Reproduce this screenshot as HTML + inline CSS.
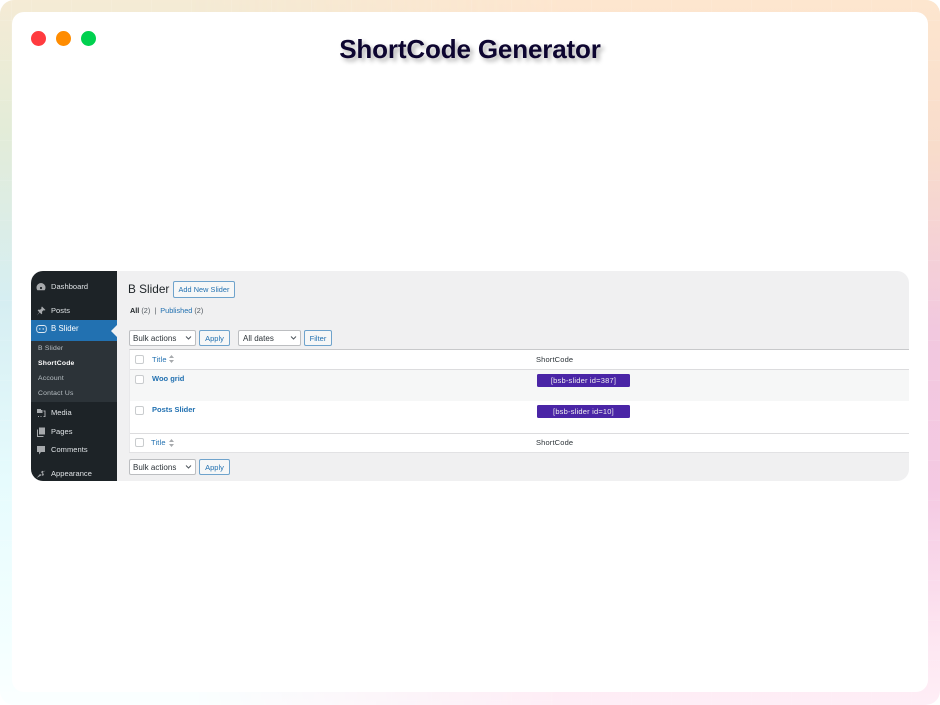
<!DOCTYPE html>
<html><head><meta charset="utf-8"><style>
*{box-sizing:border-box}
html,body{margin:0;padding:0;background:#fff}
body{width:940px;height:705px;position:relative;overflow:hidden;font-family:"Liberation Sans",sans-serif}
.a{position:absolute;white-space:nowrap}
#bg{left:0;top:0;width:940px;height:705px;border-radius:14px;background:
linear-gradient(180deg,#f5ebd5 0,#e3ecd8 130px,#d6eef2 300px,#e6fbfd 480px,#f3ffff 640px,#fbffff 705px)}
#bg2{left:0;top:0;width:940px;height:705px;border-radius:14px;background:
linear-gradient(180deg,#fde6cf 0,#f8dccb 150px,#f2c8df 330px,#f5c9e3 490px,#fde6f1 640px,#feeef6 705px);
-webkit-mask-image:linear-gradient(90deg,transparent 20%,#000 60%);mask-image:linear-gradient(90deg,transparent 20%,#000 60%)}
#grid{left:0;top:0;width:940px;height:705px;border-radius:14px;background:
repeating-linear-gradient(90deg,rgba(255,255,255,.1) 0 1px,transparent 1px 40px) 31px 0,
repeating-linear-gradient(180deg,rgba(255,255,255,.1) 0 1px,transparent 1px 40px) 0 20px}
#card{left:12px;top:12px;width:916px;height:680px;background:#fff;border-radius:12px}
.dot{width:15px;height:15px;border-radius:50%;top:31px}
h1{position:absolute;margin:0;left:240px;width:460px;top:34px;text-align:center;font-size:26px;line-height:31px;font-weight:700;color:#0d0530;letter-spacing:-.15px;text-shadow:3px 3px 5px rgba(0,0,0,.32);white-space:nowrap}
#wp{left:31px;top:271px;width:878px;height:210px;background:#f0f0f1;border-radius:12px;overflow:hidden;filter:blur(.3px)}
#side{left:0;top:0;width:86px;height:210px;background:#1d2327}
#sub{left:0;top:70px;width:86px;height:61px;background:#2c3338}
#act{left:0;top:49px;width:86px;height:21px;background:#2271b1}
#arrow{left:80px;top:54px;border:6px solid transparent;border-left:0;border-right-color:#f0f0f1}
.m{left:20px;font-size:7.500px;line-height:10px;color:#dfe3e6;letter-spacing:.05px}
.s{left:7px;font-size:6.800px;line-height:10px;color:#b9c0c5;letter-spacing:.2px}
.i{left:5px;width:10px;height:10px}
.blue{color:#2271b1}
.sel{height:16px;background:#fff;border:1px solid #bcbec1;border-radius:2px;font-size:8px;line-height:15px;padding-left:3px;color:#2c3338;letter-spacing:.02px}
.sel svg{position:absolute;right:3px;top:4px}
.btn{height:16px;background:#f6f7f7;border:1px solid #6fa3cc;border-radius:2px;font-size:7.500px;line-height:15px;text-align:center;color:#2271b1}
.cb{width:9px;height:9px;border:1px solid #c9ccce;border-radius:2px;background:#fff}
.th{font-size:7.500px;line-height:10px;letter-spacing:.15px}
.code{left:506px;width:93px;height:13px;background:#4a25a6;border-radius:1.500px;color:#eee;font-size:7.500px;line-height:13px;text-align:center;letter-spacing:.2px}
.tt{font-size:7.500px;line-height:10px;font-weight:700;color:#2271b1}
</style></head><body>
<div class="a" id="bg"></div><div class="a" id="bg2"></div><div class="a" id="grid"></div>
<div class="a" id="card"></div>
<div class="a dot" style="left:31px;background:#ff3b3f"></div>
<div class="a dot" style="left:56px;background:#ff8c00"></div>
<div class="a dot" style="left:81px;background:#00d14f"></div>
<h1>ShortCode Generator</h1>
<div class="a" id="wp">
<div class="a" id="side"></div><div class="a" id="sub"></div><div class="a" id="act"></div><div class="a" id="arrow"></div>
<svg class="a i" style="top:11px" viewBox="0 0 10 10"><path d="M5 1a4.500 4.500 0 0 0-4.500 4.500c0 1 .3 2 .9 2.800h7.200c.6-.8.9-1.800.9-2.800A4.500 4.500 0 0 0 5 1z" fill="#a7aaad"/><circle cx="5" cy="6" r="1.100" fill="#1d2327"/></svg>
<div class="a m" style="top:11px">Dashboard</div>
<svg class="a i" style="top:35px" viewBox="0 0 10 10"><path d="M6 .5l3.500 3.500-1 .5-1-.3-1.500 1.500.2 1.800-.8.700-1.700-1.700L.8 9.500l2.500-3.400L1.600 4.400l.7-.8 1.800.2L5.600 2.300 5.300 1.300z" fill="#a7aaad"/></svg>
<div class="a m" style="top:35px">Posts</div>
<svg class="a i" style="top:53px;width:11px" viewBox="0 0 11 10"><rect x=".7" y="1.500" width="9.600" height="7" rx="2.500" fill="none" stroke="#dfe9f2" stroke-width=".9"/><circle cx="3.800" cy="5" r=".7" fill="#dfe9f2"/><circle cx="7.200" cy="5" r=".7" fill="#dfe9f2"/></svg>
<div class="a m" style="top:53px;color:#fff;font-size:7.800px">B Slider</div>
<div class="a s" style="top:73px">B Slider</div>
<div class="a s" style="top:88px;color:#fff;font-weight:700">ShortCode</div>
<div class="a s" style="top:103px">Account</div>
<div class="a s" style="top:118px">Contact Us</div>
<svg class="a i" style="top:137px" viewBox="0 0 10 10"><path d="M1 1h4v1h1.500v3H1z" fill="#a7aaad"/><path d="M7.500 3H9v5.500H7.500M2 8.500h1M4.500 8.500h1" fill="none" stroke="#a7aaad"/></svg>
<div class="a m" style="top:137px">Media</div>
<svg class="a i" style="top:156px" viewBox="0 0 10 10"><path d="M3 .5h6v7H3z" fill="#a7aaad"/><path d="M1.500 2.500v7h6" fill="none" stroke="#a7aaad"/></svg>
<div class="a m" style="top:156px">Pages</div>
<svg class="a i" style="top:174px" viewBox="0 0 10 10"><path d="M1 1h8v6H5L3 9.500V7H1z" fill="#a7aaad"/></svg>
<div class="a m" style="top:174px">Comments</div>
<svg class="a i" style="top:198px" viewBox="0 0 10 10"><path d="M9.500 1L8 3 6.500 1.800 5 3l1.500 2-1 1L4 5 .5 9l4.500-2.500.7-.5 1.300 1 1-2L6.500 4z" fill="#a7aaad"/></svg>
<div class="a m" style="top:198px">Appearance</div>

<div class="a" style="left:97px;top:11px;font-size:11.800px;line-height:15px;color:#1d2327">B Slider</div>
<div class="a btn" style="left:142px;top:10px;width:62px;height:17px;line-height:16px;font-size:7.300px;letter-spacing:.05px">Add New Slider</div>
<div class="a" style="left:99px;top:35px;font-size:7.300px;line-height:10px;color:#50575e"><b style="color:#1d2327">All</b> (2) &nbsp;|&nbsp; <span class="blue">Published</span> (2)</div>
<div class="a sel" style="left:98px;top:59px;width:67px">Bulk actions<svg width="7" height="6" viewBox="0 0 7 6"><path d="M1 1.500l2.500 2.500L6 1.500" fill="none" stroke="#50575e"/></svg></div>
<div class="a btn" style="left:168px;top:59px;width:31px">Apply</div>
<div class="a sel" style="left:207px;top:59px;width:63px;padding-left:4px">All dates<svg width="7" height="6" viewBox="0 0 7 6"><path d="M1 1.500l2.500 2.500L6 1.500" fill="none" stroke="#50575e"/></svg></div>
<div class="a btn" style="left:273px;top:59px;width:28px">Filter</div>

<div class="a" style="left:98px;top:78px;width:780px;height:104px;background:#fff;border-top:1px solid #c8c9cb;border-left:1px solid #e8e8ea"></div>
<div class="a" style="left:99px;top:98px;width:779px;height:32px;background:#f6f7f7;border-top:1px solid #dcdcde"></div>
<div class="a" style="left:99px;top:162px;width:779px;height:1px;background:#dcdcde"></div>
<div class="a" style="left:98px;top:181px;width:780px;height:1px;background:#e2e2e4"></div>

<div class="a cb" style="left:104px;top:84px"></div>
<div class="a th blue" style="left:121px;top:84px">Title</div>
<svg class="a" style="left:138px;top:84px" width="5" height="8" viewBox="0 0 5 8"><path d="M2.500 0L5 3H0zM2.500 8L0 5h5z" fill="#a7aaad"/></svg>
<div class="a th" style="left:505px;top:84px;color:#2c3338">ShortCode</div>
<div class="a cb" style="left:104px;top:104px"></div>
<div class="a tt" style="left:121px;top:103px">Woo grid</div>
<div class="a code" style="top:103px">[bsb-slider id=387]</div>
<div class="a cb" style="left:104px;top:135px"></div>
<div class="a tt" style="left:121px;top:134px">Posts Slider</div>
<div class="a code" style="top:134px">[bsb-slider id=10]</div>
<div class="a cb" style="left:104px;top:167px"></div>
<div class="a th blue" style="left:120px;top:167px">Title</div>
<svg class="a" style="left:138px;top:168px" width="5" height="8" viewBox="0 0 5 8"><path d="M2.500 0L5 3H0zM2.500 8L0 5h5z" fill="#a7aaad"/></svg>
<div class="a th" style="left:505px;top:167px;color:#2c3338">ShortCode</div>
<div class="a sel" style="left:98px;top:188px;width:67px">Bulk actions<svg width="7" height="6" viewBox="0 0 7 6"><path d="M1 1.500l2.500 2.500L6 1.500" fill="none" stroke="#50575e"/></svg></div>
<div class="a btn" style="left:168px;top:188px;width:31px">Apply</div>
</div>
</body></html>
